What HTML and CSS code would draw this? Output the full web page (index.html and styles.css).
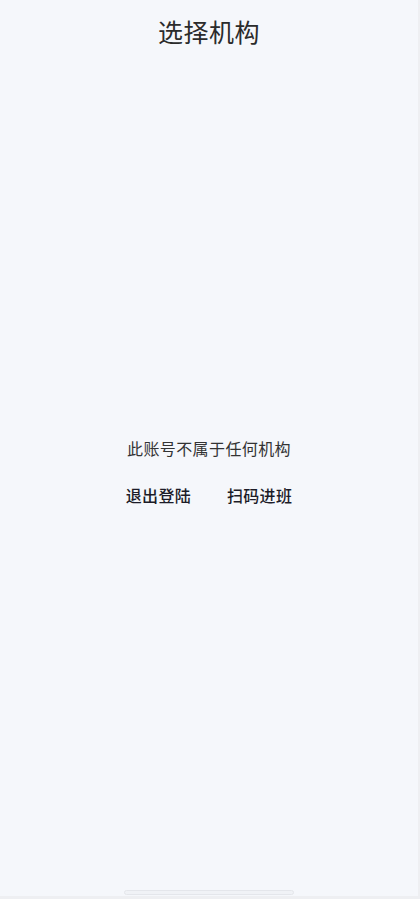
FILE: index.html
```html
<!DOCTYPE html>
<html lang="zh-CN">
<head>
    <meta charset="UTF-8">
    <title>选择机构</title>
    <link rel="stylesheet" href="styles.css">
</head>
<body>
    <div class="page">
        <h1 class="title">选择机构</h1>
        <div class="empty">
            <p class="empty-text">此账号不属于任何机构</p>
            <div class="actions">
                <span class="action">退出登陆</span>
                <span class="action">扫码进班</span>
            </div>
        </div>
        <div class="home-bar"></div>
    </div>
</body>
</html>
```

FILE: styles.css
```css
html {
    background-color: #eeeff2;
}
body {
    margin: 0;
    font-family: "Noto Sans CJK SC", "Noto Sans", sans-serif;
}
.page {
    width: 418px;
    height: 896px;
    background-color: #f5f7fb;
    display: flex;
    flex-direction: column;
    align-items: center;
    box-sizing: border-box;
}
.title {
    margin: 0;
    padding-top: 13px;
    font-size: 25px;
    font-weight: 400;
    line-height: 36px;
    color: #2b2b2b;
    letter-spacing: 0.5px;
}
.empty {
    flex: 1;
    display: flex;
    flex-direction: column;
    align-items: center;
    justify-content: center;
    margin-top: 4px;
}
.empty-text {
    margin: 0;
    font-size: 16px;
    line-height: 24px;
    color: #333;
    letter-spacing: 0.4px;
}
.actions {
    display: flex;
    gap: 36px;
    margin-top: 23px;
}
.action {
    font-size: 16px;
    line-height: 24px;
    font-weight: 500;
    color: #1c1c28;
    letter-spacing: 0.3px;
}
.home-bar {
    width: 168px;
    height: 3px;
    margin-bottom: 1px;
    border: 1px solid #e4e6eb;
    border-radius: 3px;
    background-color: #f0f2f6;
}
```
